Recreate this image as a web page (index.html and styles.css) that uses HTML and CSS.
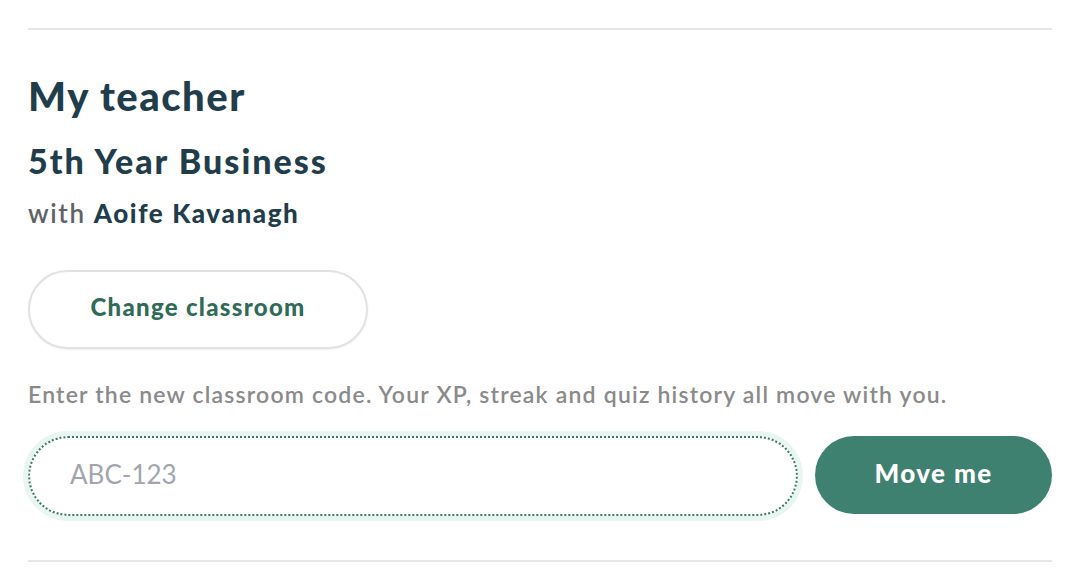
FILE: index.html
```html
<!DOCTYPE html>
<html lang="en">
<head>
<meta charset="utf-8">
<title>My teacher</title>
<link rel="stylesheet" href="styles.css">
</head>
<body>
<section class="panel">
  <h2 class="title">My teacher</h2>
  <h3 class="class-name">5th Year Business</h3>
  <p class="teacher">with <strong>Aoife Kavanagh</strong></p>
  <button class="btn-outline" type="button">Change classroom</button>
  <p class="hint">Enter the new classroom code. Your XP, streak and quiz history all move with you.</p>
  <form class="code-row">
    <input class="code-input" type="text" placeholder="ABC-123">
    <button class="btn-primary" type="button">Move me</button>
  </form>
</section>
</body>
</html>
```

FILE: styles.css
```css
html, body {
  margin: 0;
  padding: 0;
  background: #ffffff;
}
body {
  font-family: "Lato", "Open Sans", sans-serif;
  color: #1f3d4a;
}
.panel {
  margin: 28px 28px 0;
  border-top: 2px solid #e6e6e6;
  border-bottom: 2px solid #e6e6e6;
  padding: 42px 0 44px;
  display: flex;
  flex-direction: column;
  align-items: flex-start;
}
.title {
  margin: 0;
  font-size: 40px;
  font-weight: 900;
  line-height: 48px;
  letter-spacing: 1.5px;
  color: #1f3d4a;
}
.class-name {
  margin: 21px 0 0;
  font-size: 34px;
  font-weight: 900;
  line-height: 40px;
  letter-spacing: 2px;
  color: #1f3d4a;
}
.teacher {
  margin: 16px 0 0;
  font-size: 26px;
  line-height: 32px;
  letter-spacing: 1.6px;
  color: #5f6366;
  font-weight: 600;
}
.teacher strong {
  color: #1f3d4a;
  font-weight: 900;
}
.btn-outline {
  margin-top: 41px;
  width: 340px;
  height: 79px;
  padding: 0 0 7px;
  border-radius: 40px;
  border: 2px solid #e2e2e2;
  background: #ffffff;
  box-shadow: 0 1px 2px rgba(0,0,0,0.06);
  font-family: inherit;
  font-size: 24px;
  font-weight: 900;
  letter-spacing: 1.3px;
  color: #2f6b57;
  cursor: pointer;
}
.hint {
  margin: 31px 0 0;
  font-size: 23px;
  line-height: 28px;
  letter-spacing: 1.2px;
  color: #8a8a8a;
  font-weight: 600;
}
.code-row {
  margin: 28px 0 0;
  width: 100%;
  display: flex;
  gap: 17px;
  align-items: flex-start;
}
.code-input {
  flex: 1;
  box-sizing: border-box;
  height: 80px;
  border-radius: 40px;
  border: 2px dotted #3c7a66;
  box-shadow: 0 0 0 5px #e9f5f1;
  padding: 0 40px 5px;
  font-family: "Lato", sans-serif;
  font-size: 26px;
  color: #1f3d4a;
  background: #fff;
  outline: none;
}
.code-input::placeholder {
  color: #a2a5ad;
}
.btn-primary {
  width: 237px;
  height: 78px;
  padding: 0 0 5px;
  border: none;
  border-radius: 39px;
  background: #3f8170;
  color: #ffffff;
  font-family: inherit;
  font-size: 26px;
  font-weight: 900;
  letter-spacing: 1.4px;
  cursor: pointer;
}
```
